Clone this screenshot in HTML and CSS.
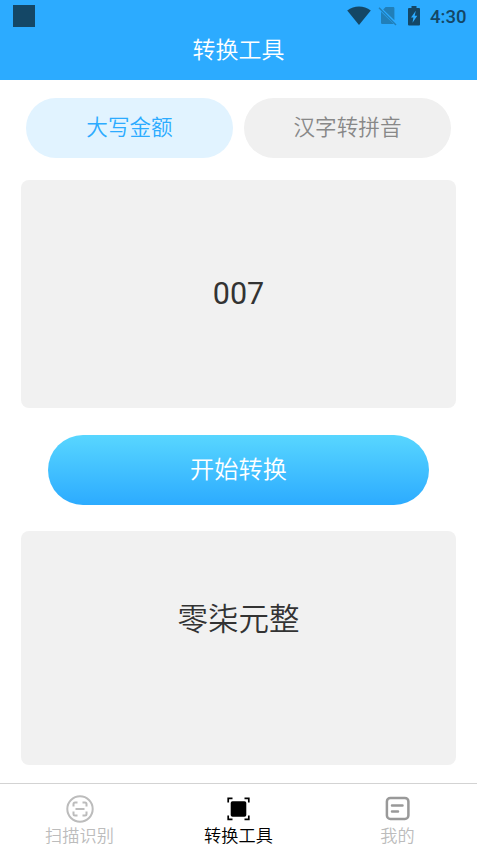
FILE: index.html
```html
<!DOCTYPE html>
<html lang="zh-CN">
<head>
<meta charset="utf-8">
<title>转换工具</title>
<link rel="stylesheet" href="styles.css">
</head>
<body>
<div class="app">
  <header class="header">
    <div class="status">
      <span class="notice"></span>
      <svg class="wifi" width="24" height="20" viewBox="0 0 24 20"><path d="M.2 4.4C7.200-.9 16.800-.9 23.800 4.400L12 19z" fill="#144766"/></svg>
      <svg class="sim" width="20" height="20" viewBox="0 0 20 20"><path d="M7.600 1H15.200Q16.400 1 16.400 2.200V14.200L5.200 3.400zM3 5.700L15.800 18H4.200Q3 18 3 16.800z" fill="#217fb9"/><path d="M1 1.800L18 19" stroke="#217fb9" stroke-width="1.400"/></svg>
      <svg class="battery" width="12" height="20" viewBox="0 0 12 20"><path d="M3.500 0H8.500V2H11Q12 2 12 3V18.500Q12 19.500 11 19.500H1Q0 19.500 0 18.500V3Q0 2 1 2H3.500z" fill="#144766"/><path d="M7.800 4.800L3 11.400H5.400L4.500 16.800L9.300 9.800H6.700z" fill="#2cabff"/></svg>
      <span class="time">4:30</span>
    </div>
    <h1 class="title">转换工具</h1>
  </header>
  <main class="content">
    <div class="tabs">
      <button class="tab tab-active">大写金额</button>
      <button class="tab">汉字转拼音</button>
    </div>
    <section class="card input-card">007</section>
    <button class="convert">开始转换</button>
    <section class="card result-card">零柒元整</section>
  </main>
  <nav class="nav">
    <a class="nav-item">
      <svg class="nav-icon" width="28" height="28" viewBox="0 0 28 28" fill="none" stroke="#bcbcbc" stroke-width="2"><circle cx="14" cy="14" r="12.700"/><path d="M7.500 11.500V9Q7.500 7.500 9 7.500H11.500M16.500 7.500H19Q20.500 7.500 20.500 9V11.500M20.500 16.500V19Q20.500 20.500 19 20.500H16.500M11.500 20.500H9Q7.500 20.500 7.500 19V16.500M9.500 14H18.500"/></svg>
      <span>扫描识别</span>
    </a>
    <a class="nav-item nav-active">
      <svg class="nav-icon" width="28" height="28" viewBox="0 0 28 28"><rect x="5.700" y="6.300" width="15.600" height="15.500" rx="1.800"/><path d="M3.200 7.500V3.300H7.500M19.500 3.300H23.800V7.500M23.800 20.500V24.300H19.500M7.500 24.300H3.200V20.500" fill="none" stroke="#000" stroke-width="1.700"/></svg>
      <span>转换工具</span>
    </a>
    <a class="nav-item">
      <svg class="nav-icon" width="28" height="28" viewBox="0 0 28 28" fill="none" stroke="#999" stroke-width="2.500"><rect x="2.900" y="2.900" width="21.500" height="21" rx="3.500"/><path d="M8 10.500H18.500M8 16.500H14" stroke-linecap="round"/></svg>
      <span>我的</span>
    </a>
  </nav>
</div>
</body>
</html>
```
FILE: styles.css
```css
* {
  box-sizing: border-box;
}

body {
  margin: 0;
  background: #fff;
  font-family: Roboto, "Noto Sans CJK SC", sans-serif;
  font-weight: 350;
}

.app {
  display: flex;
  flex-direction: column;
  height: 848px;
}

.header {
  height: 80px;
  background: #2cabff;
}

.status {
  display: flex;
  align-items: flex-start;
  height: 32px;
  padding: 5px 10px 0 13px;
}

.notice {
  width: 22px;
  height: 22px;
  margin-right: auto;
  background: #144766;
}

.wifi {
  margin: 1px 7px 0 0;
}

.sim {
  margin: 1px 10px 0 0;
}

.battery {
  margin: 1px 10px 0 0;
}

.time {
  width: 37px;
  color: #144766;
  font-size: 18.5px;
  font-weight: 500;
  line-height: 24px;
}

.title {
  margin: 0;
  color: #fff;
  font-size: 23px;
  font-weight: inherit;
  line-height: 38px;
  text-align: center;
}

.content {
  flex: 1;
  padding: 18px 21px 0;
}

.tabs {
  display: flex;
  gap: 11px;
  padding: 0 5px;
}

button {
  padding: 0;
  border: 0;
  font-family: inherit;
  font-weight: inherit;
}

.tab {
  flex: 1;
  height: 60px;
  padding-bottom: 5px;
  border-radius: 30px;
  background: #f0f0f0;
  color: #888;
  font-size: 21.6px;
}

.tab-active {
  background: #e1f3ff;
  color: #2cabff;
}

.card {
  display: flex;
  justify-content: center;
  border-radius: 8px;
  background: #f1f1f1;
  color: #333;
  font-size: 30.5px;
}

.input-card {
  align-items: center;
  height: 228px;
  margin-top: 22px;
  padding-bottom: 1px;
  font-weight: 400;
}

.convert {
  display: block;
  width: 381px;
  height: 70px;
  margin: 27px auto 26px;
  padding-bottom: 6px;
  border-radius: 35px;
  background: linear-gradient(#58d6ff, #2cabff);
  color: #fff;
  font-size: 24.2px;
}

.result-card {
  height: 234px;
  padding-top: 67px;
  line-height: 44px;
}

.nav {
  display: flex;
  height: 65px;
  border-top: 1px solid #d3d3d3;
}

.nav-item {
  display: flex;
  flex: 1;
  flex-direction: column;
  align-items: center;
  padding-top: 11px;
  color: #bcbcbc;
  font-size: 17.2px;
  line-height: 27px;
}

.nav-icon {
  flex-shrink: 0;
}

.nav-active {
  color: #000;
}
```
